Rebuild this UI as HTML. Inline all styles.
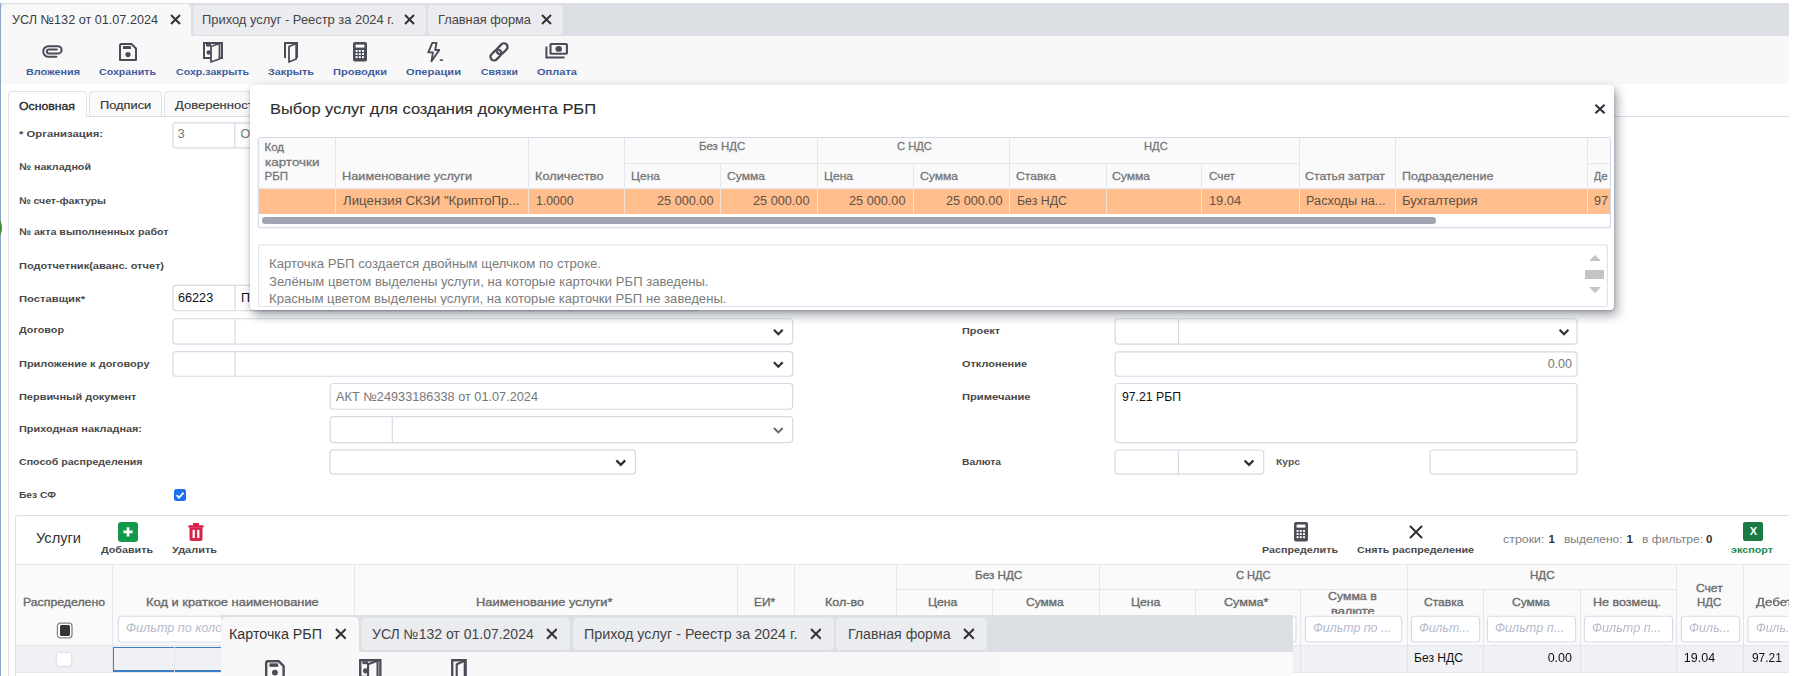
<!DOCTYPE html>
<html lang="ru"><head><meta charset="utf-8"><title>УСЛ №132 от 01.07.2024</title>
<style>
html,body{margin:0;padding:0;background:#fff;}
body{width:1797px;height:676px;position:relative;overflow:hidden;font-family:"Liberation Sans",sans-serif;}
.a{position:absolute;}
.t{white-space:nowrap;}
#pg{position:absolute;left:0;top:0;width:1797px;height:676px;overflow:hidden;filter:blur(0.45px);}
</style></head><body><div id="pg">
<div class="a" style="left:0px;top:3px;width:1789px;height:673px;background:#fff;"></div>
<div class="a" style="left:0px;top:3px;width:1789px;height:33px;background:#dcdfe4;"></div>
<div class="a" style="left:0px;top:36px;width:1789px;height:48px;background:#f8f8f9;"></div>
<div class="a" style="left:0px;top:3px;width:1px;height:673px;background:#8fa6c8;"></div>
<div class="a" style="left:1px;top:4px;width:190px;height:32px;background:#f8f8f9;border-radius:5px 5px 0 0;"></div>
<div class="a" style="left:193px;top:5px;width:233px;height:30px;background:#ebecf0;border-radius:4px;"></div>
<div class="a" style="left:428px;top:5px;width:135px;height:30px;background:#ebecf0;border-radius:4px;"></div>
<div class="a t" style="left:12.00px;top:13.00px;font-size:13px;line-height:13px;color:#3a3a3a;transform:scaleX(0.9721);transform-origin:0 50%;">УСЛ №132 от 01.07.2024</div>
<div class="a t" style="left:202.00px;top:13.00px;font-size:13px;line-height:13px;color:#444;transform:scaleX(0.9921);transform-origin:0 50%;">Приход услуг - Реестр за 2024 г.</div>
<div class="a t" style="left:438.00px;top:13.00px;font-size:13px;line-height:13px;color:#444;transform:scaleX(0.9849);transform-origin:0 50%;">Главная форма</div>
<svg class="a" style="left:169.5px;top:14.2px;" width="11.0" height="11.0" viewBox="-5.5 -5.5 11.0 11.0"><path d="M-4.5 -4.5L4.5 4.5M4.5 -4.5L-4.5 4.5" stroke="#333" stroke-width="2" fill="none"/></svg>
<svg class="a" style="left:404.0px;top:14.2px;" width="11.0" height="11.0" viewBox="-5.5 -5.5 11.0 11.0"><path d="M-4.5 -4.5L4.5 4.5M4.5 -4.5L-4.5 4.5" stroke="#333" stroke-width="2" fill="none"/></svg>
<svg class="a" style="left:541.0px;top:14.2px;" width="11.0" height="11.0" viewBox="-5.5 -5.5 11.0 11.0"><path d="M-4.5 -4.5L4.5 4.5M4.5 -4.5L-4.5 4.5" stroke="#333" stroke-width="2" fill="none"/></svg>
<div class="a t" style="left:26.00px;top:66.70px;font-size:9.6px;line-height:9.6px;color:#3f5c9c;font-weight:700;transform:scaleX(1.1265);transform-origin:0 50%;">Вложения</div>
<div class="a t" style="left:99.00px;top:66.70px;font-size:9.6px;line-height:9.6px;color:#3f5c9c;font-weight:700;transform:scaleX(1.1095);transform-origin:0 50%;">Сохранить</div>
<div class="a t" style="left:176.00px;top:66.70px;font-size:9.6px;line-height:9.6px;color:#3f5c9c;font-weight:700;transform:scaleX(1.1087);transform-origin:0 50%;">Сохр.закрыть</div>
<div class="a t" style="left:268.00px;top:66.70px;font-size:9.6px;line-height:9.6px;color:#3f5c9c;font-weight:700;transform:scaleX(1.1275);transform-origin:0 50%;">Закрыть</div>
<div class="a t" style="left:333.00px;top:66.70px;font-size:9.6px;line-height:9.6px;color:#3f5c9c;font-weight:700;transform:scaleX(1.1508);transform-origin:0 50%;">Проводки</div>
<div class="a t" style="left:406.00px;top:66.70px;font-size:9.6px;line-height:9.6px;color:#3f5c9c;font-weight:700;transform:scaleX(1.1583);transform-origin:0 50%;">Операции</div>
<div class="a t" style="left:481.00px;top:66.70px;font-size:9.6px;line-height:9.6px;color:#3f5c9c;font-weight:700;transform:scaleX(1.0958);transform-origin:0 50%;">Связки</div>
<div class="a t" style="left:537.00px;top:66.70px;font-size:9.6px;line-height:9.6px;color:#3f5c9c;font-weight:700;transform:scaleX(1.1516);transform-origin:0 50%;">Оплата</div>
<svg class="a" style="left:41.0px;top:44.0px;" width="24" height="15" viewBox="-1 -1 24 15"><path d="M14.8 4.5 H6.9 A2.05 2.05 0 0 0 6.9 8.6 H15.9 A3.7 3.7 0 0 0 15.9 1.2 H6.5 A5.3 5.3 0 0 0 6.5 11.8 H14.3" fill="none" stroke="#4a4d57" stroke-width="2" stroke-linecap="round"/></svg>
<svg class="a" style="left:117.5px;top:42px;" width="20" height="20" viewBox="0 0 20 20"><path d="M3 2 H13.5 L18 6.5 V18 H2 V3 Z" fill="none" stroke="#4a4d57" stroke-width="2" stroke-linejoin="round"/><rect x="5" y="4" width="8" height="3" fill="#4a4d57"/><circle cx="10" cy="12.5" r="2.6" fill="#4a4d57"/></svg>
<svg class="a" style="left:201.8px;top:41px;" width="22" height="22" viewBox="0 0 22 22"><path d="M2 2 H20 V17 H2 Z" fill="none" stroke="#4a4d57" stroke-width="2"/><path d="M9 5.5 L17.5 2.5 V18 L9 21 Z" fill="#f8f8f9" stroke="#4a4d57" stroke-width="1.8" stroke-linejoin="round"/><rect x="4" y="3" width="5" height="2.5" fill="#4a4d57"/><circle cx="6.8" cy="11.5" r="2.3" fill="#4a4d57"/></svg>
<svg class="a" style="left:283px;top:41px;" width="16" height="22" viewBox="0 0 16 22"><path d="M2 17 V2 H14 V17" fill="none" stroke="#4a4d57" stroke-width="2"/><path d="M6 5.5 L13.2 2.5 V18 L6 21 Z" fill="#f8f8f9" stroke="#4a4d57" stroke-width="1.8" stroke-linejoin="round"/></svg>
<svg class="a" style="left:353.0px;top:42.15px;" width="14.0" height="19.5" viewBox="0 0 14 19.5"><rect x="0" y="0" width="14" height="19.5" rx="2" fill="#4a4d57"/><rect x="2.6" y="2.6" width="8.8" height="3" fill="#fff"/><rect x="2.6" y="8.0" width="2" height="1.9" fill="#fff"/><rect x="2.6" y="11.1" width="2" height="1.9" fill="#fff"/><rect x="2.6" y="14.2" width="2" height="1.9" fill="#fff"/><rect x="5.800000000000001" y="8.0" width="2" height="1.9" fill="#fff"/><rect x="5.800000000000001" y="11.1" width="2" height="1.9" fill="#fff"/><rect x="5.800000000000001" y="14.2" width="2" height="1.9" fill="#fff"/><rect x="9.0" y="8.0" width="2" height="1.9" fill="#fff"/><rect x="9.0" y="11.1" width="2" height="1.9" fill="#fff"/><rect x="9.0" y="14.2" width="2" height="1.9" fill="#fff"/></svg>
<svg class="a" style="left:424px;top:39px;" width="23" height="26" viewBox="424 39 23 26"><path d="M432.3 42.9 L436.5 42.9 L435.2 50 L439.3 50 L431.5 61.3 L432.9 52.4 L428.3 52.4 Z" fill="none" stroke="#4a4d57" stroke-width="1.9" stroke-linejoin="round"/><rect x="439.8" y="59.3" width="3.2" height="1.6" fill="#4a4d57"/></svg>
<svg class="a" style="left:486px;top:39px;" width="26" height="26" viewBox="486 39 26 26"><g transform="translate(499 51.9) rotate(-45)" fill="none" stroke="#4a4d57" stroke-width="2.3"><rect x="-1.8" y="-3.6" width="12.4" height="7.2" rx="3.6"/><rect x="-10.6" y="-3.6" width="12.4" height="7.2" rx="3.6"/></g></svg>
<svg class="a" style="left:543px;top:40px;" width="28" height="21" viewBox="543 40 28 21"><rect x="550.5" y="44" width="16.4" height="9.8" fill="none" stroke="#4a4d57" stroke-width="2.1" rx="0.8"/><ellipse cx="558.7" cy="48.9" rx="3.3" ry="2.9" fill="#4a4d57"/><path d="M546.4 46.4 V57.4 H564.6" fill="none" stroke="#4a4d57" stroke-width="2"/></svg>
<div class="a" style="left:8px;top:115.5px;width:1781px;height:1.2000000000000028px;background:#d8dde7;"></div>
<div class="a" style="left:8px;top:91px;width:79px;height:26px;background:#fff;border:1px solid #dfe2ea;box-sizing:border-box;border-radius:4px 4px 0 0;border-bottom:none;"></div>
<div class="a" style="left:8px;top:116px;width:1px;height:560px;background:#dfe2ea;"></div>
<div class="a" style="left:89px;top:91px;width:73px;height:25px;background:#fafafb;border:1px solid #dfe2ea;box-sizing:border-box;border-radius:4px 4px 0 0;border-bottom:none;"></div>
<div class="a" style="left:164px;top:91px;width:96px;height:25px;background:#fafafb;border:1px solid #dfe2ea;box-sizing:border-box;border-radius:4px 4px 0 0;border-bottom:none;"></div>
<div class="a t" style="left:18.80px;top:101.45px;font-size:11.5px;line-height:11.5px;color:#222;transform:scaleX(1.0660);transform-origin:0 50%;-webkit-text-stroke:0.3px #222;">Основная</div>
<div class="a t" style="left:99.50px;top:99.55px;font-size:11.5px;line-height:11.5px;color:#3a3a3a;transform:scaleX(1.1164);transform-origin:0 50%;-webkit-text-stroke:0.2px #3a3a3a;">Подписи</div>
<div class="a t" style="left:174.60px;top:99.55px;font-size:11.5px;line-height:11.5px;color:#3a3a3a;transform:scaleX(1.1298);transform-origin:0 50%;-webkit-text-stroke:0.2px #3a3a3a;">Доверенности</div>
<div class="a" style="left:-9px;top:218px;width:11.4px;height:20px;background:#3f9142;border-radius:50%;"></div>
<div class="a t" style="left:19.00px;top:128.90px;font-size:9.4px;line-height:9.4px;color:#484848;font-weight:700;transform:scaleX(1.2054);transform-origin:0 50%;">* Организация:</div>
<div class="a t" style="left:19.00px;top:161.90px;font-size:9.4px;line-height:9.4px;color:#484848;font-weight:700;transform:scaleX(1.1426);transform-origin:0 50%;">№ накладной</div>
<div class="a t" style="left:19.00px;top:195.90px;font-size:9.4px;line-height:9.4px;color:#484848;font-weight:700;transform:scaleX(1.1149);transform-origin:0 50%;">№ счет-фактуры</div>
<div class="a t" style="left:19.00px;top:227.40px;font-size:9.4px;line-height:9.4px;color:#484848;font-weight:700;transform:scaleX(1.1404);transform-origin:0 50%;">№ акта выполненных работ</div>
<div class="a t" style="left:19.00px;top:260.90px;font-size:9.4px;line-height:9.4px;color:#484848;font-weight:700;transform:scaleX(1.1766);transform-origin:0 50%;">Подотчетник(аванс. отчет)</div>
<div class="a t" style="left:19.00px;top:293.90px;font-size:9.4px;line-height:9.4px;color:#484848;font-weight:700;transform:scaleX(1.1969);transform-origin:0 50%;">Поставщик*</div>
<div class="a t" style="left:19.00px;top:325.40px;font-size:9.4px;line-height:9.4px;color:#484848;font-weight:700;transform:scaleX(1.1502);transform-origin:0 50%;">Договор</div>
<div class="a t" style="left:19.00px;top:358.90px;font-size:9.4px;line-height:9.4px;color:#484848;font-weight:700;transform:scaleX(1.1724);transform-origin:0 50%;">Приложение к договору</div>
<div class="a t" style="left:19.00px;top:392.40px;font-size:9.4px;line-height:9.4px;color:#484848;font-weight:700;transform:scaleX(1.1684);transform-origin:0 50%;">Первичный документ</div>
<div class="a t" style="left:19.00px;top:424.40px;font-size:9.4px;line-height:9.4px;color:#484848;font-weight:700;transform:scaleX(1.1604);transform-origin:0 50%;">Приходная накладная:</div>
<div class="a t" style="left:19.00px;top:457.40px;font-size:9.4px;line-height:9.4px;color:#484848;font-weight:700;transform:scaleX(1.1304);transform-origin:0 50%;">Способ распределения</div>
<div class="a t" style="left:19.00px;top:490.40px;font-size:9.4px;line-height:9.4px;color:#484848;font-weight:700;transform:scaleX(1.0882);transform-origin:0 50%;">Без СФ</div>
<div class="a t" style="left:962.00px;top:325.90px;font-size:9.4px;line-height:9.4px;color:#484848;font-weight:700;transform:scaleX(1.1620);transform-origin:0 50%;">Проект</div>
<div class="a t" style="left:962.00px;top:358.90px;font-size:9.4px;line-height:9.4px;color:#484848;font-weight:700;transform:scaleX(1.1656);transform-origin:0 50%;">Отклонение</div>
<div class="a t" style="left:962.00px;top:392.40px;font-size:9.4px;line-height:9.4px;color:#484848;font-weight:700;transform:scaleX(1.1923);transform-origin:0 50%;">Примечание</div>
<div class="a t" style="left:962.00px;top:457.40px;font-size:9.4px;line-height:9.4px;color:#484848;font-weight:700;transform:scaleX(1.0976);transform-origin:0 50%;">Валюта</div>
<div class="a t" style="left:1276.00px;top:457.40px;font-size:9.4px;line-height:9.4px;color:#555;font-weight:700;transform:scaleX(1.1027);transform-origin:0 50%;">Курс</div>
<svg class="a" style="left:170px;top:120px;" width="534" height="31" viewBox="0 0 534 31"><rect x="2.90" y="2.80" width="527.10" height="25.10" rx="3" fill="#fff" stroke="#d6d9e4" stroke-width="1.15"/><path d="M64.80 2.80 V27.90" stroke="#d6d9e4" stroke-width="1.15"/></svg>
<div class="a t" style="left:177.80px;top:128.35px;font-size:12.5px;line-height:12.5px;color:#777;">3</div>
<div class="a t" style="left:240.60px;top:128.35px;font-size:12.5px;line-height:12.5px;color:#777;">О</div>
<svg class="a" style="left:170px;top:283px;" width="534" height="31" viewBox="0 0 534 31"><rect x="2.90" y="2.40" width="527.10" height="25.30" rx="3" fill="#fff" stroke="#d6d9e4" stroke-width="1.15"/><path d="M65.00 2.40 V27.70" stroke="#d6d9e4" stroke-width="1.15"/></svg>
<div class="a t" style="left:177.80px;top:292.05px;font-size:12.5px;line-height:12.5px;color:#111;transform:scaleX(1.0125);transform-origin:0 50%;">66223</div>
<div class="a t" style="left:241.00px;top:292.05px;font-size:12.5px;line-height:12.5px;color:#111;">П</div>
<svg class="a" style="left:170px;top:316px;" width="626" height="32" viewBox="0 0 626 32"><rect x="2.90" y="2.70" width="619.70" height="25.40" rx="3" fill="#fff" stroke="#d6d9e4" stroke-width="1.15"/><path d="M65.00 2.70 V28.10" stroke="#d6d9e4" stroke-width="1.15"/><path d="M603.90 13.80 L608.30 18.20 L612.70 13.80" fill="none" stroke="#2f3138" stroke-width="2.3"/></svg>
<svg class="a" style="left:170px;top:349px;" width="626" height="31" viewBox="0 0 626 31"><rect x="2.90" y="2.60" width="619.70" height="24.60" rx="3" fill="#fff" stroke="#d6d9e4" stroke-width="1.15"/><path d="M65.00 2.60 V27.20" stroke="#d6d9e4" stroke-width="1.15"/><path d="M603.90 13.30 L608.30 17.70 L612.70 13.30" fill="none" stroke="#2f3138" stroke-width="2.3"/></svg>
<svg class="a" style="left:328px;top:381px;" width="468" height="32" viewBox="0 0 468 32"><rect x="2.20" y="2.50" width="462.40" height="25.70" rx="3" fill="#fff" stroke="#d6d9e4" stroke-width="1.15"/></svg>
<div class="a t" style="left:336.00px;top:390.75px;font-size:12.5px;line-height:12.5px;color:#777;transform:scaleX(1.0175);transform-origin:0 50%;">АКТ №24933186338 от 01.07.2024</div>
<svg class="a" style="left:328px;top:414px;" width="468" height="32" viewBox="0 0 468 32"><rect x="2.20" y="2.60" width="462.40" height="26.00" rx="3" fill="#fff" stroke="#d6d9e4" stroke-width="1.15"/><path d="M64.30 2.60 V28.60" stroke="#d6d9e4" stroke-width="1.15"/><path d="M445.90 14.00 L450.30 18.40 L454.70 14.00" fill="none" stroke="#6a6c74" stroke-width="2"/></svg>
<svg class="a" style="left:328px;top:447px;" width="311" height="31" viewBox="0 0 311 31"><rect x="2.00" y="2.90" width="305.40" height="24.20" rx="3" fill="#fff" stroke="#d6d9e4" stroke-width="1.15"/><path d="M288.40 13.40 L292.80 17.80 L297.20 13.40" fill="none" stroke="#2f3138" stroke-width="2.3"/></svg>
<div class="a" style="left:174px;top:489px;width:12px;height:12px;background:#1a6ff5;border-radius:2.5px;"></div>
<svg class="a" style="left:174px;top:489px;" width="12" height="12" viewBox="0 0 12 12"><path d="M2.6 6.2 L5 8.6 L9.6 3.6" fill="none" stroke="#fff" stroke-width="1.8"/></svg>
<svg class="a" style="left:1113px;top:316px;" width="468" height="32" viewBox="0 0 468 32"><rect x="2.10" y="2.70" width="462.00" height="25.40" rx="3" fill="#fff" stroke="#d6d9e4" stroke-width="1.15"/><path d="M65.50 2.70 V28.10" stroke="#d6d9e4" stroke-width="1.15"/><path d="M446.60 13.80 L451.00 18.20 L455.40 13.80" fill="none" stroke="#2f3138" stroke-width="2.3"/></svg>
<svg class="a" style="left:1113px;top:349px;" width="468" height="31" viewBox="0 0 468 31"><rect x="2.10" y="2.80" width="462.00" height="24.40" rx="3" fill="#fff" stroke="#d6d9e4" stroke-width="1.15"/></svg>
<div class="a t" style="left:1547.66px;top:357.95px;font-size:12.5px;line-height:12.5px;color:#777;">0.00</div>
<svg class="a" style="left:1113px;top:381px;" width="468" height="65" viewBox="0 0 468 65"><rect x="2.10" y="2.50" width="462.00" height="59.10" rx="3" fill="#fff" stroke="#d6d9e4" stroke-width="1.15"/></svg>
<div class="a t" style="left:1121.50px;top:390.75px;font-size:12.5px;line-height:12.5px;color:#111;transform:scaleX(0.9787);transform-origin:0 50%;">97.21 РБП</div>
<svg class="a" style="left:1113px;top:448px;" width="154" height="30" viewBox="0 0 154 30"><rect x="2.00" y="2.00" width="148.70" height="24.10" rx="3" fill="#fff" stroke="#d6d9e4" stroke-width="1.15"/><path d="M65.40 2.00 V26.10" stroke="#d6d9e4" stroke-width="1.15"/><path d="M131.60 12.45 L136.00 16.85 L140.40 12.45" fill="none" stroke="#2f3138" stroke-width="2.3"/></svg>
<svg class="a" style="left:1428px;top:448px;" width="153" height="30" viewBox="0 0 153 30"><rect x="2.00" y="2.00" width="147.10" height="24.10" rx="3" fill="#fff" stroke="#d6d9e4" stroke-width="1.15"/></svg>
<div class="a" style="left:15px;top:514.6px;width:1774px;height:161.39999999999998px;background:#fff;border:1px solid #dde0ea;box-sizing:border-box;border-radius:3px 0 0 0;border-right:none;border-bottom:none;"></div>
<div class="a t" style="left:36.00px;top:531.25px;font-size:14.5px;line-height:14.5px;color:#333;transform:scaleX(1.0091);transform-origin:0 50%;">Услуги</div>
<div class="a" style="left:117.5px;top:522px;width:20.0px;height:19.5px;background:#13994a;border-radius:3px;"></div>
<svg class="a" style="left:117.5px;top:522px;" width="20" height="19.5" viewBox="0 0 20 19.5"><path d="M10 5.2 V14.4 M5.4 9.8 H14.6" stroke="#fff" stroke-width="2.7" fill="none"/></svg>
<div class="a t" style="left:101.00px;top:544.80px;font-size:9.4px;line-height:9.4px;color:#484848;font-weight:700;transform:scaleX(1.1452);transform-origin:0 50%;">Добавить</div>
<svg class="a" style="left:187.5px;top:521.5px;" width="16" height="19.5" viewBox="0 0 16 19.5"><path d="M1.5 5.2 H14.5 V17 A2 2 0 0 1 12.5 19 H3.5 A2 2 0 0 1 1.5 17 Z" fill="#d8234b"/><path d="M0.4 3.2 H15.6 V5.4 H0.4 Z M5 1 H11 V3.4 H5 Z" fill="#d8234b"/><rect x="4.6" y="7.8" width="2.2" height="8.2" fill="#fff"/><rect x="9.2" y="7.8" width="2.2" height="8.2" fill="#fff"/></svg>
<div class="a t" style="left:172.00px;top:544.80px;font-size:9.4px;line-height:9.4px;color:#484848;font-weight:700;transform:scaleX(1.1693);transform-origin:0 50%;">Удалить</div>
<svg class="a" style="left:1293.6px;top:522.05px;" width="14.0" height="19.5" viewBox="0 0 14 19.5"><rect x="0" y="0" width="14" height="19.5" rx="2" fill="#4a4d57"/><rect x="2.6" y="2.6" width="8.8" height="3" fill="#fff"/><rect x="2.6" y="8.0" width="2" height="1.9" fill="#fff"/><rect x="2.6" y="11.1" width="2" height="1.9" fill="#fff"/><rect x="2.6" y="14.2" width="2" height="1.9" fill="#fff"/><rect x="5.800000000000001" y="8.0" width="2" height="1.9" fill="#fff"/><rect x="5.800000000000001" y="11.1" width="2" height="1.9" fill="#fff"/><rect x="5.800000000000001" y="14.2" width="2" height="1.9" fill="#fff"/><rect x="9.0" y="8.0" width="2" height="1.9" fill="#fff"/><rect x="9.0" y="11.1" width="2" height="1.9" fill="#fff"/><rect x="9.0" y="14.2" width="2" height="1.9" fill="#fff"/></svg>
<div class="a t" style="left:1262.00px;top:544.80px;font-size:9.4px;line-height:9.4px;color:#484848;font-weight:700;transform:scaleX(1.1445);transform-origin:0 50%;">Распределить</div>
<svg class="a" style="left:1408px;top:524px;" width="16" height="16" viewBox="-8 -8 16 16"><path d="M-6 -6 L6 6 M6 -6 L-6 6" stroke="#33353c" stroke-width="2.1" fill="none"/></svg>
<div class="a t" style="left:1357.00px;top:544.80px;font-size:9.4px;line-height:9.4px;color:#484848;font-weight:700;transform:scaleX(1.1416);transform-origin:0 50%;">Снять распределение</div>
<div class="a t" style="left:1503.00px;top:534.25px;font-size:11.5px;line-height:11.5px;color:#808080;transform:scaleX(1.0788);transform-origin:0 50%;">строки:</div>
<div class="a t" style="left:1548.50px;top:534.25px;font-size:11.5px;line-height:11.5px;color:#333;font-weight:700;">1</div>
<div class="a t" style="left:1564.00px;top:534.25px;font-size:11.5px;line-height:11.5px;color:#808080;transform:scaleX(1.0417);transform-origin:0 50%;">выделено:</div>
<div class="a t" style="left:1626.50px;top:534.25px;font-size:11.5px;line-height:11.5px;color:#333;font-weight:700;">1</div>
<div class="a t" style="left:1641.50px;top:534.25px;font-size:11.5px;line-height:11.5px;color:#808080;transform:scaleX(1.0472);transform-origin:0 50%;">в фильтре:</div>
<div class="a t" style="left:1706.00px;top:534.25px;font-size:11.5px;line-height:11.5px;color:#333;font-weight:700;">0</div>
<div class="a" style="left:1743px;top:522px;width:20px;height:19px;background:#1c7a45;border-radius:2px;"></div>
<div class="a t" style="left:1749.73px;top:526.00px;font-size:11px;line-height:11px;color:#fff;font-weight:700;">X</div>
<div class="a t" style="left:1731.00px;top:544.80px;font-size:9.4px;line-height:9.4px;color:#1c8a4a;font-weight:700;transform:scaleX(1.1492);transform-origin:0 50%;">экспорт</div>
<div class="a" style="left:16px;top:564px;width:1773px;height:82px;background:#fafafb;"></div>
<div class="a" style="left:16px;top:564px;width:1773px;height:1px;background:#e4e6ed;"></div>
<div class="a" style="left:112px;top:565px;width:1px;height:107px;background:#e4e6ed;"></div>
<div class="a" style="left:354px;top:565px;width:1px;height:107px;background:#e4e6ed;"></div>
<div class="a" style="left:737px;top:565px;width:1px;height:107px;background:#e4e6ed;"></div>
<div class="a" style="left:794px;top:565px;width:1px;height:107px;background:#e4e6ed;"></div>
<div class="a" style="left:896px;top:565px;width:1px;height:107px;background:#e4e6ed;"></div>
<div class="a" style="left:992px;top:590px;width:1px;height:82px;background:#e4e6ed;"></div>
<div class="a" style="left:1099px;top:565px;width:1px;height:107px;background:#e4e6ed;"></div>
<div class="a" style="left:1195px;top:590px;width:1px;height:82px;background:#e4e6ed;"></div>
<div class="a" style="left:1300px;top:590px;width:1px;height:82px;background:#e4e6ed;"></div>
<div class="a" style="left:1407px;top:565px;width:1px;height:107px;background:#e4e6ed;"></div>
<div class="a" style="left:1483px;top:590px;width:1px;height:82px;background:#e4e6ed;"></div>
<div class="a" style="left:1580px;top:590px;width:1px;height:82px;background:#e4e6ed;"></div>
<div class="a" style="left:1676px;top:565px;width:1px;height:107px;background:#e4e6ed;"></div>
<div class="a" style="left:1743px;top:565px;width:1px;height:107px;background:#e4e6ed;"></div>
<div class="a" style="left:896px;top:589px;width:780px;height:1px;background:#e4e6ed;"></div>
<div class="a" style="left:16px;top:645px;width:1773px;height:1px;background:#e4e6ed;"></div>
<div class="a t" style="left:23.00px;top:596.75px;font-size:11.5px;line-height:11.5px;color:#6a6a6a;transform:scaleX(1.0680);transform-origin:0 50%;-webkit-text-stroke:0.35px #6a6a6a;">Распределено</div>
<div class="a t" style="left:145.90px;top:596.75px;font-size:11.5px;line-height:11.5px;color:#6a6a6a;transform:scaleX(1.1212);transform-origin:0 50%;-webkit-text-stroke:0.35px #6a6a6a;">Код и краткое наименование</div>
<div class="a t" style="left:475.75px;top:596.75px;font-size:11.5px;line-height:11.5px;color:#6a6a6a;transform:scaleX(1.1203);transform-origin:0 50%;-webkit-text-stroke:0.35px #6a6a6a;">Наименование услуги*</div>
<div class="a t" style="left:753.50px;top:596.75px;font-size:11.5px;line-height:11.5px;color:#6a6a6a;transform:scaleX(1.0283);transform-origin:0 50%;-webkit-text-stroke:0.35px #6a6a6a;">ЕИ*</div>
<div class="a t" style="left:825.20px;top:596.75px;font-size:11.5px;line-height:11.5px;color:#6a6a6a;transform:scaleX(1.0904);transform-origin:0 50%;-webkit-text-stroke:0.35px #6a6a6a;">Кол-во</div>
<div class="a t" style="left:974.50px;top:569.55px;font-size:11.5px;line-height:11.5px;color:#6a6a6a;transform:scaleX(1.0137);transform-origin:0 50%;-webkit-text-stroke:0.35px #6a6a6a;">Без НДС</div>
<div class="a t" style="left:928.40px;top:596.75px;font-size:11.5px;line-height:11.5px;color:#6a6a6a;transform:scaleX(1.0631);transform-origin:0 50%;-webkit-text-stroke:0.35px #6a6a6a;">Цена</div>
<div class="a t" style="left:1025.60px;top:596.75px;font-size:11.5px;line-height:11.5px;color:#6a6a6a;transform:scaleX(1.0404);transform-origin:0 50%;-webkit-text-stroke:0.35px #6a6a6a;">Сумма</div>
<div class="a t" style="left:1236.20px;top:569.55px;font-size:11.5px;line-height:11.5px;color:#6a6a6a;transform:scaleX(0.9636);transform-origin:0 50%;-webkit-text-stroke:0.35px #6a6a6a;">С НДС</div>
<div class="a t" style="left:1131.20px;top:596.75px;font-size:11.5px;line-height:11.5px;color:#6a6a6a;transform:scaleX(1.0631);transform-origin:0 50%;-webkit-text-stroke:0.35px #6a6a6a;">Цена</div>
<div class="a t" style="left:1224.35px;top:596.75px;font-size:11.5px;line-height:11.5px;color:#6a6a6a;transform:scaleX(1.0958);transform-origin:0 50%;-webkit-text-stroke:0.35px #6a6a6a;">Сумма*</div>
<div class="a t" style="left:1328.35px;top:591.25px;font-size:11.5px;line-height:11.5px;color:#6a6a6a;transform:scaleX(1.0714);transform-origin:0 50%;-webkit-text-stroke:0.35px #6a6a6a;">Сумма в</div>
<div class="a t" style="left:1330.90px;top:605.85px;font-size:11.5px;line-height:11.5px;color:#6a6a6a;transform:scaleX(1.1179);transform-origin:0 50%;-webkit-text-stroke:0.35px #6a6a6a;height:8.0px;overflow:hidden;">валюте</div>
<div class="a t" style="left:1530.45px;top:569.55px;font-size:11.5px;line-height:11.5px;color:#6a6a6a;transform:scaleX(1.0038);transform-origin:0 50%;-webkit-text-stroke:0.35px #6a6a6a;">НДС</div>
<div class="a t" style="left:1424.40px;top:596.75px;font-size:11.5px;line-height:11.5px;color:#6a6a6a;transform:scaleX(1.0467);transform-origin:0 50%;-webkit-text-stroke:0.35px #6a6a6a;">Ставка</div>
<div class="a t" style="left:1511.90px;top:596.75px;font-size:11.5px;line-height:11.5px;color:#6a6a6a;transform:scaleX(1.0459);transform-origin:0 50%;-webkit-text-stroke:0.35px #6a6a6a;">Сумма</div>
<div class="a t" style="left:1593.10px;top:596.75px;font-size:11.5px;line-height:11.5px;color:#6a6a6a;transform:scaleX(1.0902);transform-origin:0 50%;-webkit-text-stroke:0.35px #6a6a6a;">Не возмещ.</div>
<div class="a t" style="left:1695.75px;top:582.85px;font-size:11.5px;line-height:11.5px;color:#6a6a6a;transform:scaleX(1.0490);transform-origin:0 50%;-webkit-text-stroke:0.35px #6a6a6a;">Счет</div>
<div class="a t" style="left:1696.90px;top:596.75px;font-size:11.5px;line-height:11.5px;color:#6a6a6a;transform:scaleX(0.9915);transform-origin:0 50%;-webkit-text-stroke:0.35px #6a6a6a;">НДС</div>
<div class="a t" style="left:1755.80px;top:596.75px;font-size:11.5px;line-height:11.5px;color:#6a6a6a;transform:scaleX(1.1542);transform-origin:0 50%;-webkit-text-stroke:0.35px #6a6a6a;">Дебет</div>
<svg class="a" style="left:116px;top:614px;" width="237" height="32" viewBox="0 0 237 32"><rect x="2.40" y="2.20" width="231.20" height="25.80" rx="3" fill="#fff" stroke="#d9dce7" stroke-width="1.15"/></svg>
<div class="a t" style="left:125.70px;top:622.20px;font-size:12px;line-height:12px;color:#b7bacb;font-style:italic;transform:scaleX(1.0548);transform-origin:0 50%;">Фильтр по коло</div>
<svg class="a" style="left:356px;top:614px;" width="380" height="32" viewBox="0 0 380 32"><rect x="2.40" y="2.20" width="374.20" height="25.80" rx="3" fill="#fff" stroke="#d9dce7" stroke-width="1.15"/></svg>
<svg class="a" style="left:739px;top:614px;" width="54" height="32" viewBox="0 0 54 32"><rect x="2.40" y="2.20" width="48.20" height="25.80" rx="3" fill="#fff" stroke="#d9dce7" stroke-width="1.15"/></svg>
<svg class="a" style="left:796px;top:614px;" width="99" height="32" viewBox="0 0 99 32"><rect x="2.40" y="2.20" width="93.20" height="25.80" rx="3" fill="#fff" stroke="#d9dce7" stroke-width="1.15"/></svg>
<svg class="a" style="left:898px;top:614px;" width="93" height="32" viewBox="0 0 93 32"><rect x="2.40" y="2.20" width="87.20" height="25.80" rx="3" fill="#fff" stroke="#d9dce7" stroke-width="1.15"/></svg>
<svg class="a" style="left:994px;top:614px;" width="104" height="32" viewBox="0 0 104 32"><rect x="2.40" y="2.20" width="98.20" height="25.80" rx="3" fill="#fff" stroke="#d9dce7" stroke-width="1.15"/></svg>
<svg class="a" style="left:1101px;top:614px;" width="93" height="32" viewBox="0 0 93 32"><rect x="2.40" y="2.20" width="87.20" height="25.80" rx="3" fill="#fff" stroke="#d9dce7" stroke-width="1.15"/></svg>
<svg class="a" style="left:1197px;top:614px;" width="103" height="32" viewBox="0 0 103 32"><rect x="2.40" y="2.20" width="96.60" height="25.80" rx="3" fill="#fff" stroke="#d9dce7" stroke-width="1.15"/></svg>
<svg class="a" style="left:1303px;top:614px;" width="102" height="32" viewBox="0 0 102 32"><rect x="2.40" y="2.20" width="96.20" height="25.80" rx="3" fill="#fff" stroke="#d9dce7" stroke-width="1.15"/></svg>
<div class="a t" style="left:1312.70px;top:622.20px;font-size:12px;line-height:12px;color:#b7bacb;font-style:italic;transform:scaleX(1.0332);transform-origin:0 50%;">Фильтр по ...</div>
<svg class="a" style="left:1409px;top:614px;" width="74" height="32" viewBox="0 0 74 32"><rect x="2.40" y="2.20" width="68.20" height="25.80" rx="3" fill="#fff" stroke="#d9dce7" stroke-width="1.15"/></svg>
<div class="a t" style="left:1418.70px;top:622.20px;font-size:12px;line-height:12px;color:#b7bacb;font-style:italic;transform:scaleX(1.0233);transform-origin:0 50%;">Фильт...</div>
<svg class="a" style="left:1485px;top:614px;" width="94" height="32" viewBox="0 0 94 32"><rect x="2.40" y="2.20" width="88.20" height="25.80" rx="3" fill="#fff" stroke="#d9dce7" stroke-width="1.15"/></svg>
<div class="a t" style="left:1494.70px;top:622.20px;font-size:12px;line-height:12px;color:#b7bacb;font-style:italic;transform:scaleX(1.0537);transform-origin:0 50%;">Фильтр п...</div>
<svg class="a" style="left:1582px;top:614px;" width="94" height="32" viewBox="0 0 94 32"><rect x="2.40" y="2.20" width="88.20" height="25.80" rx="3" fill="#fff" stroke="#d9dce7" stroke-width="1.15"/></svg>
<div class="a t" style="left:1591.70px;top:622.20px;font-size:12px;line-height:12px;color:#b7bacb;font-style:italic;transform:scaleX(1.0537);transform-origin:0 50%;">Фильтр п...</div>
<svg class="a" style="left:1679px;top:614px;" width="64" height="32" viewBox="0 0 64 32"><rect x="2.40" y="2.20" width="58.20" height="25.80" rx="3" fill="#fff" stroke="#d9dce7" stroke-width="1.15"/></svg>
<div class="a t" style="left:1688.70px;top:622.20px;font-size:12px;line-height:12px;color:#b7bacb;font-style:italic;transform:scaleX(1.0510);transform-origin:0 50%;">Филь...</div>
<svg class="a" style="left:1746px;top:614px;" width="57" height="32" viewBox="0 0 57 32"><rect x="2.00" y="2.20" width="51.00" height="25.80" rx="3" fill="#fff" stroke="#d9dce7" stroke-width="1.15"/></svg>
<div class="a t" style="left:1755.80px;top:622.20px;font-size:12px;line-height:12px;color:#b7bacb;font-style:italic;transform:scaleX(1.0176);transform-origin:0 50%;">Филь.</div>
<svg class="a" style="left:55px;top:621px;" width="21" height="20" viewBox="0 0 21 20"><rect x="2.40" y="2.20" width="14.60" height="14.60" rx="3" fill="#fff" stroke="#858585" stroke-width="1.3"/></svg>
<div class="a" style="left:59.5px;top:625.4px;width:10.5px;height:10.200000000000045px;background:#343434;border-radius:1.5px;"></div>
<div class="a" style="left:16px;top:646.3px;width:1773px;height:25.700000000000045px;background:#f0f1f4;"></div>
<div class="a" style="left:112px;top:646.3px;width:1px;height:25.700000000000045px;background:#e2e4ec;"></div>
<div class="a" style="left:354px;top:646.3px;width:1px;height:25.700000000000045px;background:#e2e4ec;"></div>
<div class="a" style="left:737px;top:646.3px;width:1px;height:25.700000000000045px;background:#e2e4ec;"></div>
<div class="a" style="left:794px;top:646.3px;width:1px;height:25.700000000000045px;background:#e2e4ec;"></div>
<div class="a" style="left:896px;top:646.3px;width:1px;height:25.700000000000045px;background:#e2e4ec;"></div>
<div class="a" style="left:992px;top:646.3px;width:1px;height:25.700000000000045px;background:#e2e4ec;"></div>
<div class="a" style="left:1099px;top:646.3px;width:1px;height:25.700000000000045px;background:#e2e4ec;"></div>
<div class="a" style="left:1195px;top:646.3px;width:1px;height:25.700000000000045px;background:#e2e4ec;"></div>
<div class="a" style="left:1300px;top:646.3px;width:1px;height:25.700000000000045px;background:#e2e4ec;"></div>
<div class="a" style="left:1407px;top:646.3px;width:1px;height:25.700000000000045px;background:#e2e4ec;"></div>
<div class="a" style="left:1483px;top:646.3px;width:1px;height:25.700000000000045px;background:#e2e4ec;"></div>
<div class="a" style="left:1580px;top:646.3px;width:1px;height:25.700000000000045px;background:#e2e4ec;"></div>
<div class="a" style="left:1676px;top:646.3px;width:1px;height:25.700000000000045px;background:#e2e4ec;"></div>
<div class="a" style="left:1743px;top:646.3px;width:1px;height:25.700000000000045px;background:#e2e4ec;"></div>
<div class="a" style="left:16px;top:672px;width:1773px;height:1px;background:#e4e6ed;"></div>
<svg class="a" style="left:54px;top:650px;" width="21" height="20" viewBox="0 0 21 20"><rect x="2.20" y="2.20" width="15.60" height="14.40" rx="3.5" fill="#fff" stroke="#dcdde2" stroke-width="1.1"/></svg>
<div class="a" style="left:112.6px;top:646.8px;width:241.4px;height:1.6000000000000227px;background:#3d7fc1;"></div>
<div class="a" style="left:112.6px;top:670.2px;width:241.4px;height:1.599999999999909px;background:#3d7fc1;"></div>
<div class="a" style="left:112.6px;top:646.8px;width:1.6000000000000085px;height:25.0px;background:#3d7fc1;"></div>
<div class="a" style="left:173.8px;top:646.8px;width:1.1999999999999886px;height:25.0px;background:#e4e6ee;"></div>
<div class="a t" style="left:1413.80px;top:652.15px;font-size:12.5px;line-height:12.5px;color:#111;transform:scaleX(0.9702);transform-origin:0 50%;">Без НДС</div>
<div class="a t" style="left:1547.66px;top:652.15px;font-size:12.5px;line-height:12.5px;color:#111;">0.00</div>
<div class="a t" style="left:1683.80px;top:652.15px;font-size:12.5px;line-height:12.5px;color:#111;">19.04</div>
<div class="a t" style="left:1751.50px;top:652.15px;font-size:12.5px;line-height:12.5px;color:#111;transform:scaleX(0.9526);transform-origin:0 50%;">97.21</div>
<div class="a" style="left:1789px;top:0px;width:8px;height:676px;background:#fff;"></div>
<div class="a" style="left:249.7px;top:85px;width:1364.6px;height:225.2px;background:#fff;border-radius:4px;box-shadow:3px 5px 11px rgba(10,20,40,.40),0 1px 3px rgba(10,20,40,.18);"></div>
<div class="a t" style="left:270.00px;top:101.45px;font-size:15.5px;line-height:15.5px;color:#2e2e2e;transform:scaleX(1.0618);transform-origin:0 50%;-webkit-text-stroke:0.12px #2e2e2e;">Выбор услуг для создания документа РБП</div>
<svg class="a" style="left:1593.4px;top:102px;" width="14" height="14" viewBox="-7 -7 14 14"><path d="M-4.6 -4.2 L4.6 4.2 M4.6 -4.2 L-4.6 4.2" stroke="#2f323b" stroke-width="2.2" fill="none"/></svg>
<svg class="a" style="left:256px;top:135px;" width="1358" height="96" viewBox="0 0 1358 96"><rect x="2.30" y="2.50" width="1352.20" height="90.10" rx="2" fill="#fff" stroke="#d6dae8" stroke-width="1.15"/></svg>
<div class="a" style="left:259px;top:138px;width:1351px;height:50px;background:#fafafb;"></div>
<div class="a" style="left:335.4px;top:138px;width:1.0px;height:50px;background:#e4e6ed;"></div>
<div class="a" style="left:527.6px;top:138px;width:1.0px;height:50px;background:#e4e6ed;"></div>
<div class="a" style="left:623.6px;top:138px;width:1.0px;height:50px;background:#e4e6ed;"></div>
<div class="a" style="left:720px;top:163.4px;width:1px;height:24.599999999999994px;background:#e4e6ed;"></div>
<div class="a" style="left:816.8px;top:138px;width:1.0px;height:50px;background:#e4e6ed;"></div>
<div class="a" style="left:913px;top:163.4px;width:1px;height:24.599999999999994px;background:#e4e6ed;"></div>
<div class="a" style="left:1009.2px;top:138px;width:1.0px;height:50px;background:#e4e6ed;"></div>
<div class="a" style="left:1105.6px;top:163.4px;width:1.0px;height:24.599999999999994px;background:#e4e6ed;"></div>
<div class="a" style="left:1201.4px;top:163.4px;width:1.0px;height:24.599999999999994px;background:#e4e6ed;"></div>
<div class="a" style="left:1298.6px;top:138px;width:1.0px;height:50px;background:#e4e6ed;"></div>
<div class="a" style="left:1394.6px;top:138px;width:1.0px;height:50px;background:#e4e6ed;"></div>
<div class="a" style="left:1587.4px;top:138px;width:1.0px;height:50px;background:#e4e6ed;"></div>
<div class="a" style="left:624px;top:162.9px;width:675px;height:1.0px;background:#e4e6ed;"></div>
<div class="a" style="left:1588px;top:162.9px;width:22px;height:1.0px;background:#e4e6ed;"></div>
<div class="a" style="left:259px;top:188px;width:1351px;height:1px;background:#e4e6ed;"></div>
<div class="a t" style="left:264.50px;top:142.15px;font-size:11.5px;line-height:11.5px;color:#767676;-webkit-text-stroke:0.3px #767676;">Код</div>
<div class="a t" style="left:264.50px;top:156.55px;font-size:11.5px;line-height:11.5px;color:#767676;transform:scaleX(1.1705);transform-origin:0 50%;-webkit-text-stroke:0.3px #767676;">карточки</div>
<div class="a t" style="left:264.50px;top:170.85px;font-size:11.5px;line-height:11.5px;color:#767676;-webkit-text-stroke:0.3px #767676;">РБП</div>
<div class="a t" style="left:342.00px;top:171.15px;font-size:11.5px;line-height:11.5px;color:#767676;transform:scaleX(1.1076);transform-origin:0 50%;-webkit-text-stroke:0.3px #767676;">Наименование услуги</div>
<div class="a t" style="left:534.50px;top:171.15px;font-size:11.5px;line-height:11.5px;color:#767676;transform:scaleX(1.1090);transform-origin:0 50%;-webkit-text-stroke:0.3px #767676;">Количество</div>
<div class="a t" style="left:699.00px;top:140.55px;font-size:11.5px;line-height:11.5px;color:#767676;transform:scaleX(0.9944);transform-origin:0 50%;-webkit-text-stroke:0.3px #767676;">Без НДС</div>
<div class="a t" style="left:631.00px;top:171.15px;font-size:11.5px;line-height:11.5px;color:#767676;transform:scaleX(1.0486);transform-origin:0 50%;-webkit-text-stroke:0.3px #767676;">Цена</div>
<div class="a t" style="left:727.00px;top:171.15px;font-size:11.5px;line-height:11.5px;color:#767676;transform:scaleX(1.0514);transform-origin:0 50%;-webkit-text-stroke:0.3px #767676;">Сумма</div>
<div class="a t" style="left:897.20px;top:140.55px;font-size:11.5px;line-height:11.5px;color:#767676;transform:scaleX(0.9720);transform-origin:0 50%;-webkit-text-stroke:0.3px #767676;">С НДС</div>
<div class="a t" style="left:823.50px;top:171.15px;font-size:11.5px;line-height:11.5px;color:#767676;transform:scaleX(1.0486);transform-origin:0 50%;-webkit-text-stroke:0.3px #767676;">Цена</div>
<div class="a t" style="left:920.00px;top:171.15px;font-size:11.5px;line-height:11.5px;color:#767676;transform:scaleX(1.0514);transform-origin:0 50%;-webkit-text-stroke:0.3px #767676;">Сумма</div>
<div class="a t" style="left:1143.60px;top:140.55px;font-size:11.5px;line-height:11.5px;color:#767676;transform:scaleX(0.9752);transform-origin:0 50%;-webkit-text-stroke:0.3px #767676;">НДС</div>
<div class="a t" style="left:1016.00px;top:171.15px;font-size:11.5px;line-height:11.5px;color:#767676;transform:scaleX(1.0627);transform-origin:0 50%;-webkit-text-stroke:0.3px #767676;">Ставка</div>
<div class="a t" style="left:1112.00px;top:171.15px;font-size:11.5px;line-height:11.5px;color:#767676;transform:scaleX(1.0514);transform-origin:0 50%;-webkit-text-stroke:0.3px #767676;">Сумма</div>
<div class="a t" style="left:1209.00px;top:171.15px;font-size:11.5px;line-height:11.5px;color:#767676;transform:scaleX(1.0215);transform-origin:0 50%;-webkit-text-stroke:0.3px #767676;">Счет</div>
<div class="a t" style="left:1305.00px;top:171.15px;font-size:11.5px;line-height:11.5px;color:#767676;transform:scaleX(1.0700);transform-origin:0 50%;-webkit-text-stroke:0.3px #767676;">Статья затрат</div>
<div class="a t" style="left:1401.50px;top:171.15px;font-size:11.5px;line-height:11.5px;color:#767676;transform:scaleX(1.0917);transform-origin:0 50%;-webkit-text-stroke:0.3px #767676;">Подразделение</div>
<div class="a t" style="left:1593.50px;top:171.15px;font-size:11.5px;line-height:11.5px;color:#767676;-webkit-text-stroke:0.3px #767676;width:16px;overflow:hidden;">Де</div>
<div class="a" style="left:259px;top:189.2px;width:1351px;height:24.400000000000006px;background:#ffbe8c;"></div>
<div class="a" style="left:335.4px;top:189.2px;width:1.0px;height:24.400000000000006px;background:#f6e3d6;"></div>
<div class="a" style="left:527.6px;top:189.2px;width:1.0px;height:24.400000000000006px;background:#f6e3d6;"></div>
<div class="a" style="left:623.6px;top:189.2px;width:1.0px;height:24.400000000000006px;background:#f6e3d6;"></div>
<div class="a" style="left:720px;top:189.2px;width:1px;height:24.400000000000006px;background:#f6e3d6;"></div>
<div class="a" style="left:816.8px;top:189.2px;width:1.0px;height:24.400000000000006px;background:#f6e3d6;"></div>
<div class="a" style="left:913px;top:189.2px;width:1px;height:24.400000000000006px;background:#f6e3d6;"></div>
<div class="a" style="left:1009.2px;top:189.2px;width:1.0px;height:24.400000000000006px;background:#f6e3d6;"></div>
<div class="a" style="left:1105.6px;top:189.2px;width:1.0px;height:24.400000000000006px;background:#f6e3d6;"></div>
<div class="a" style="left:1201.4px;top:189.2px;width:1.0px;height:24.400000000000006px;background:#f6e3d6;"></div>
<div class="a" style="left:1298.6px;top:189.2px;width:1.0px;height:24.400000000000006px;background:#f6e3d6;"></div>
<div class="a" style="left:1394.6px;top:189.2px;width:1.0px;height:24.400000000000006px;background:#f6e3d6;"></div>
<div class="a" style="left:1587.4px;top:189.2px;width:1.0px;height:24.400000000000006px;background:#f6e3d6;"></div>
<div class="a t" style="left:342.50px;top:194.65px;font-size:12.5px;line-height:12.5px;color:#5d5148;transform:scaleX(1.0600);transform-origin:0 50%;">Лицензия СКЗИ "КриптоПр...</div>
<div class="a t" style="left:535.50px;top:194.65px;font-size:12.5px;line-height:12.5px;color:#5d5148;transform:scaleX(0.9808);transform-origin:0 50%;">1.0000</div>
<div class="a t" style="left:657.00px;top:194.65px;font-size:12.5px;line-height:12.5px;color:#5d5148;transform:scaleX(1.0160);transform-origin:0 50%;">25 000.00</div>
<div class="a t" style="left:753.00px;top:194.65px;font-size:12.5px;line-height:12.5px;color:#5d5148;transform:scaleX(1.0160);transform-origin:0 50%;">25 000.00</div>
<div class="a t" style="left:849.00px;top:194.65px;font-size:12.5px;line-height:12.5px;color:#5d5148;transform:scaleX(1.0160);transform-origin:0 50%;">25 000.00</div>
<div class="a t" style="left:945.50px;top:194.65px;font-size:12.5px;line-height:12.5px;color:#5d5148;transform:scaleX(1.0160);transform-origin:0 50%;">25 000.00</div>
<div class="a t" style="left:1016.50px;top:194.65px;font-size:12.5px;line-height:12.5px;color:#5d5148;transform:scaleX(0.9880);transform-origin:0 50%;">Без НДС</div>
<div class="a t" style="left:1209.00px;top:194.65px;font-size:12.5px;line-height:12.5px;color:#5d5148;transform:scaleX(1.0230);transform-origin:0 50%;">19.04</div>
<div class="a t" style="left:1305.50px;top:194.65px;font-size:12.5px;line-height:12.5px;color:#5d5148;transform:scaleX(1.0200);transform-origin:0 50%;">Расходы на...</div>
<div class="a t" style="left:1402.00px;top:194.65px;font-size:12.5px;line-height:12.5px;color:#5d5148;transform:scaleX(1.0457);transform-origin:0 50%;">Бухгалтерия</div>
<div class="a t" style="left:1594.00px;top:194.65px;font-size:12.5px;line-height:12.5px;color:#5d5148;width:15.5px;overflow:hidden;">97</div>
<div class="a" style="left:261.5px;top:217px;width:1174.5px;height:6.599999999999994px;background:#a1a4b2;border-radius:3.3px;"></div>
<svg class="a" style="left:256px;top:242px;" width="1355" height="68" viewBox="0 0 1355 68"><rect x="2.60" y="2.80" width="1348.80" height="61.70" rx="2.5" fill="#fff" stroke="#e0e3ec" stroke-width="1.15"/></svg>
<div class="a t" style="left:269.00px;top:258.25px;font-size:12.5px;line-height:12.5px;color:#7b7b7b;transform:scaleX(1.0506);transform-origin:0 50%;">Карточка РБП создается двойным щелчком по строке.</div>
<div class="a t" style="left:269.00px;top:275.75px;font-size:12.5px;line-height:12.5px;color:#7b7b7b;transform:scaleX(1.0474);transform-origin:0 50%;">Зелёным цветом выделены услуги, на которые карточки РБП заведены.</div>
<div class="a t" style="left:269.00px;top:292.75px;font-size:12.5px;line-height:12.5px;color:#7b7b7b;transform:scaleX(1.0492);transform-origin:0 50%;height:12px;overflow:hidden;">Красным цветом выделены услуги, на которые карточки РБП не заведены.</div>
<svg class="a" style="left:1589px;top:255px;" width="12" height="6" viewBox="0 0 12 6"><path d="M0 6 L6 0 L12 6 Z" fill="#c4c4c4"/></svg>
<div class="a" style="left:1585px;top:270px;width:19px;height:8.5px;background:#c4c4c4;"></div>
<svg class="a" style="left:1589px;top:287px;" width="12" height="6" viewBox="0 0 12 6"><path d="M0 0 L6 6 L12 0 Z" fill="#c4c4c4"/></svg>
<div class="a" style="left:221px;top:615.5px;width:1072.2px;height:60.5px;background:#fafafa;"></div>
<div class="a" style="left:221px;top:615.3px;width:1072.2px;height:36.5px;background:#dcdfe4;"></div>
<div class="a" style="left:221px;top:651.8px;width:779px;height:24.200000000000045px;background:#f8f8f9;"></div>
<div class="a" style="left:221px;top:617px;width:138.39999999999998px;height:35px;background:#f8f8f9;border-radius:5px 5px 0 0;"></div>
<div class="a" style="left:361px;top:617.6px;width:209.39999999999998px;height:32.60000000000002px;background:#ebecf0;border-radius:4px;"></div>
<div class="a" style="left:573px;top:617.6px;width:260.79999999999995px;height:32.60000000000002px;background:#ebecf0;border-radius:4px;"></div>
<div class="a" style="left:836.2px;top:617.6px;width:151.0px;height:32.60000000000002px;background:#ebecf0;border-radius:4px;"></div>
<div class="a t" style="left:229.00px;top:627.00px;font-size:14px;line-height:14px;color:#333;transform:scaleX(1.0202);transform-origin:0 50%;">Карточка РБП</div>
<div class="a t" style="left:372.00px;top:627.00px;font-size:14px;line-height:14px;color:#444;">УСЛ №132 от 01.07.2024</div>
<div class="a t" style="left:584.00px;top:627.00px;font-size:14px;line-height:14px;color:#444;transform:scaleX(1.0244);transform-origin:0 50%;">Приход услуг - Реестр за 2024 г.</div>
<div class="a t" style="left:847.50px;top:627.00px;font-size:14px;line-height:14px;color:#444;transform:scaleX(1.0080);transform-origin:0 50%;">Главная форма</div>
<svg class="a" style="left:334.6px;top:628.1px;" width="11.8" height="11.8" viewBox="-5.9 -5.9 11.8 11.8"><path d="M-4.9 -4.9L4.9 4.9M4.9 -4.9L-4.9 4.9" stroke="#333" stroke-width="2.1" fill="none"/></svg>
<svg class="a" style="left:545.6px;top:628.1px;" width="11.8" height="11.8" viewBox="-5.9 -5.9 11.8 11.8"><path d="M-4.9 -4.9L4.9 4.9M4.9 -4.9L-4.9 4.9" stroke="#333" stroke-width="2.1" fill="none"/></svg>
<svg class="a" style="left:809.6px;top:628.1px;" width="11.8" height="11.8" viewBox="-5.9 -5.9 11.8 11.8"><path d="M-4.9 -4.9L4.9 4.9M4.9 -4.9L-4.9 4.9" stroke="#333" stroke-width="2.1" fill="none"/></svg>
<svg class="a" style="left:962.9px;top:628.1px;" width="11.8" height="11.8" viewBox="-5.9 -5.9 11.8 11.8"><path d="M-4.9 -4.9L4.9 4.9M4.9 -4.9L-4.9 4.9" stroke="#333" stroke-width="2.1" fill="none"/></svg>
<svg class="a" style="left:264.1px;top:658.8px" width="21.8" height="21.8" viewBox="0 0 20 20"><path d="M3 2 H13.5 L18 6.5 V18 H2 V3 Z" fill="none" stroke="#4a4d57" stroke-width="2.2" stroke-linejoin="round"/><rect x="5" y="4" width="8" height="3.2" fill="#4a4d57"/><circle cx="10" cy="12.5" r="2.7" fill="#4a4d57"/></svg>
<svg class="a" style="left:358.1px;top:657.7px" width="24.6" height="24.6" viewBox="0 0 22 22"><path d="M2 2 H20 V17 H2 Z" fill="none" stroke="#4a4d57" stroke-width="2.1"/><path d="M9 5.5 L17.5 2.5 V18 L9 21 Z" fill="#f8f8f9" stroke="#4a4d57" stroke-width="1.9" stroke-linejoin="round"/><rect x="4" y="3" width="5" height="2.5" fill="#4a4d57"/><circle cx="6.8" cy="11.5" r="2.3" fill="#4a4d57"/></svg>
<svg class="a" style="left:449.7px;top:657.7px" width="17.9" height="24.6" viewBox="0 0 16 22"><path d="M2 17 V2 H14 V17" fill="none" stroke="#4a4d57" stroke-width="2.1"/><path d="M6 5.5 L13.2 2.5 V18 L6 21 Z" fill="#f8f8f9" stroke="#4a4d57" stroke-width="1.9" stroke-linejoin="round"/></svg>
</div></body></html>
